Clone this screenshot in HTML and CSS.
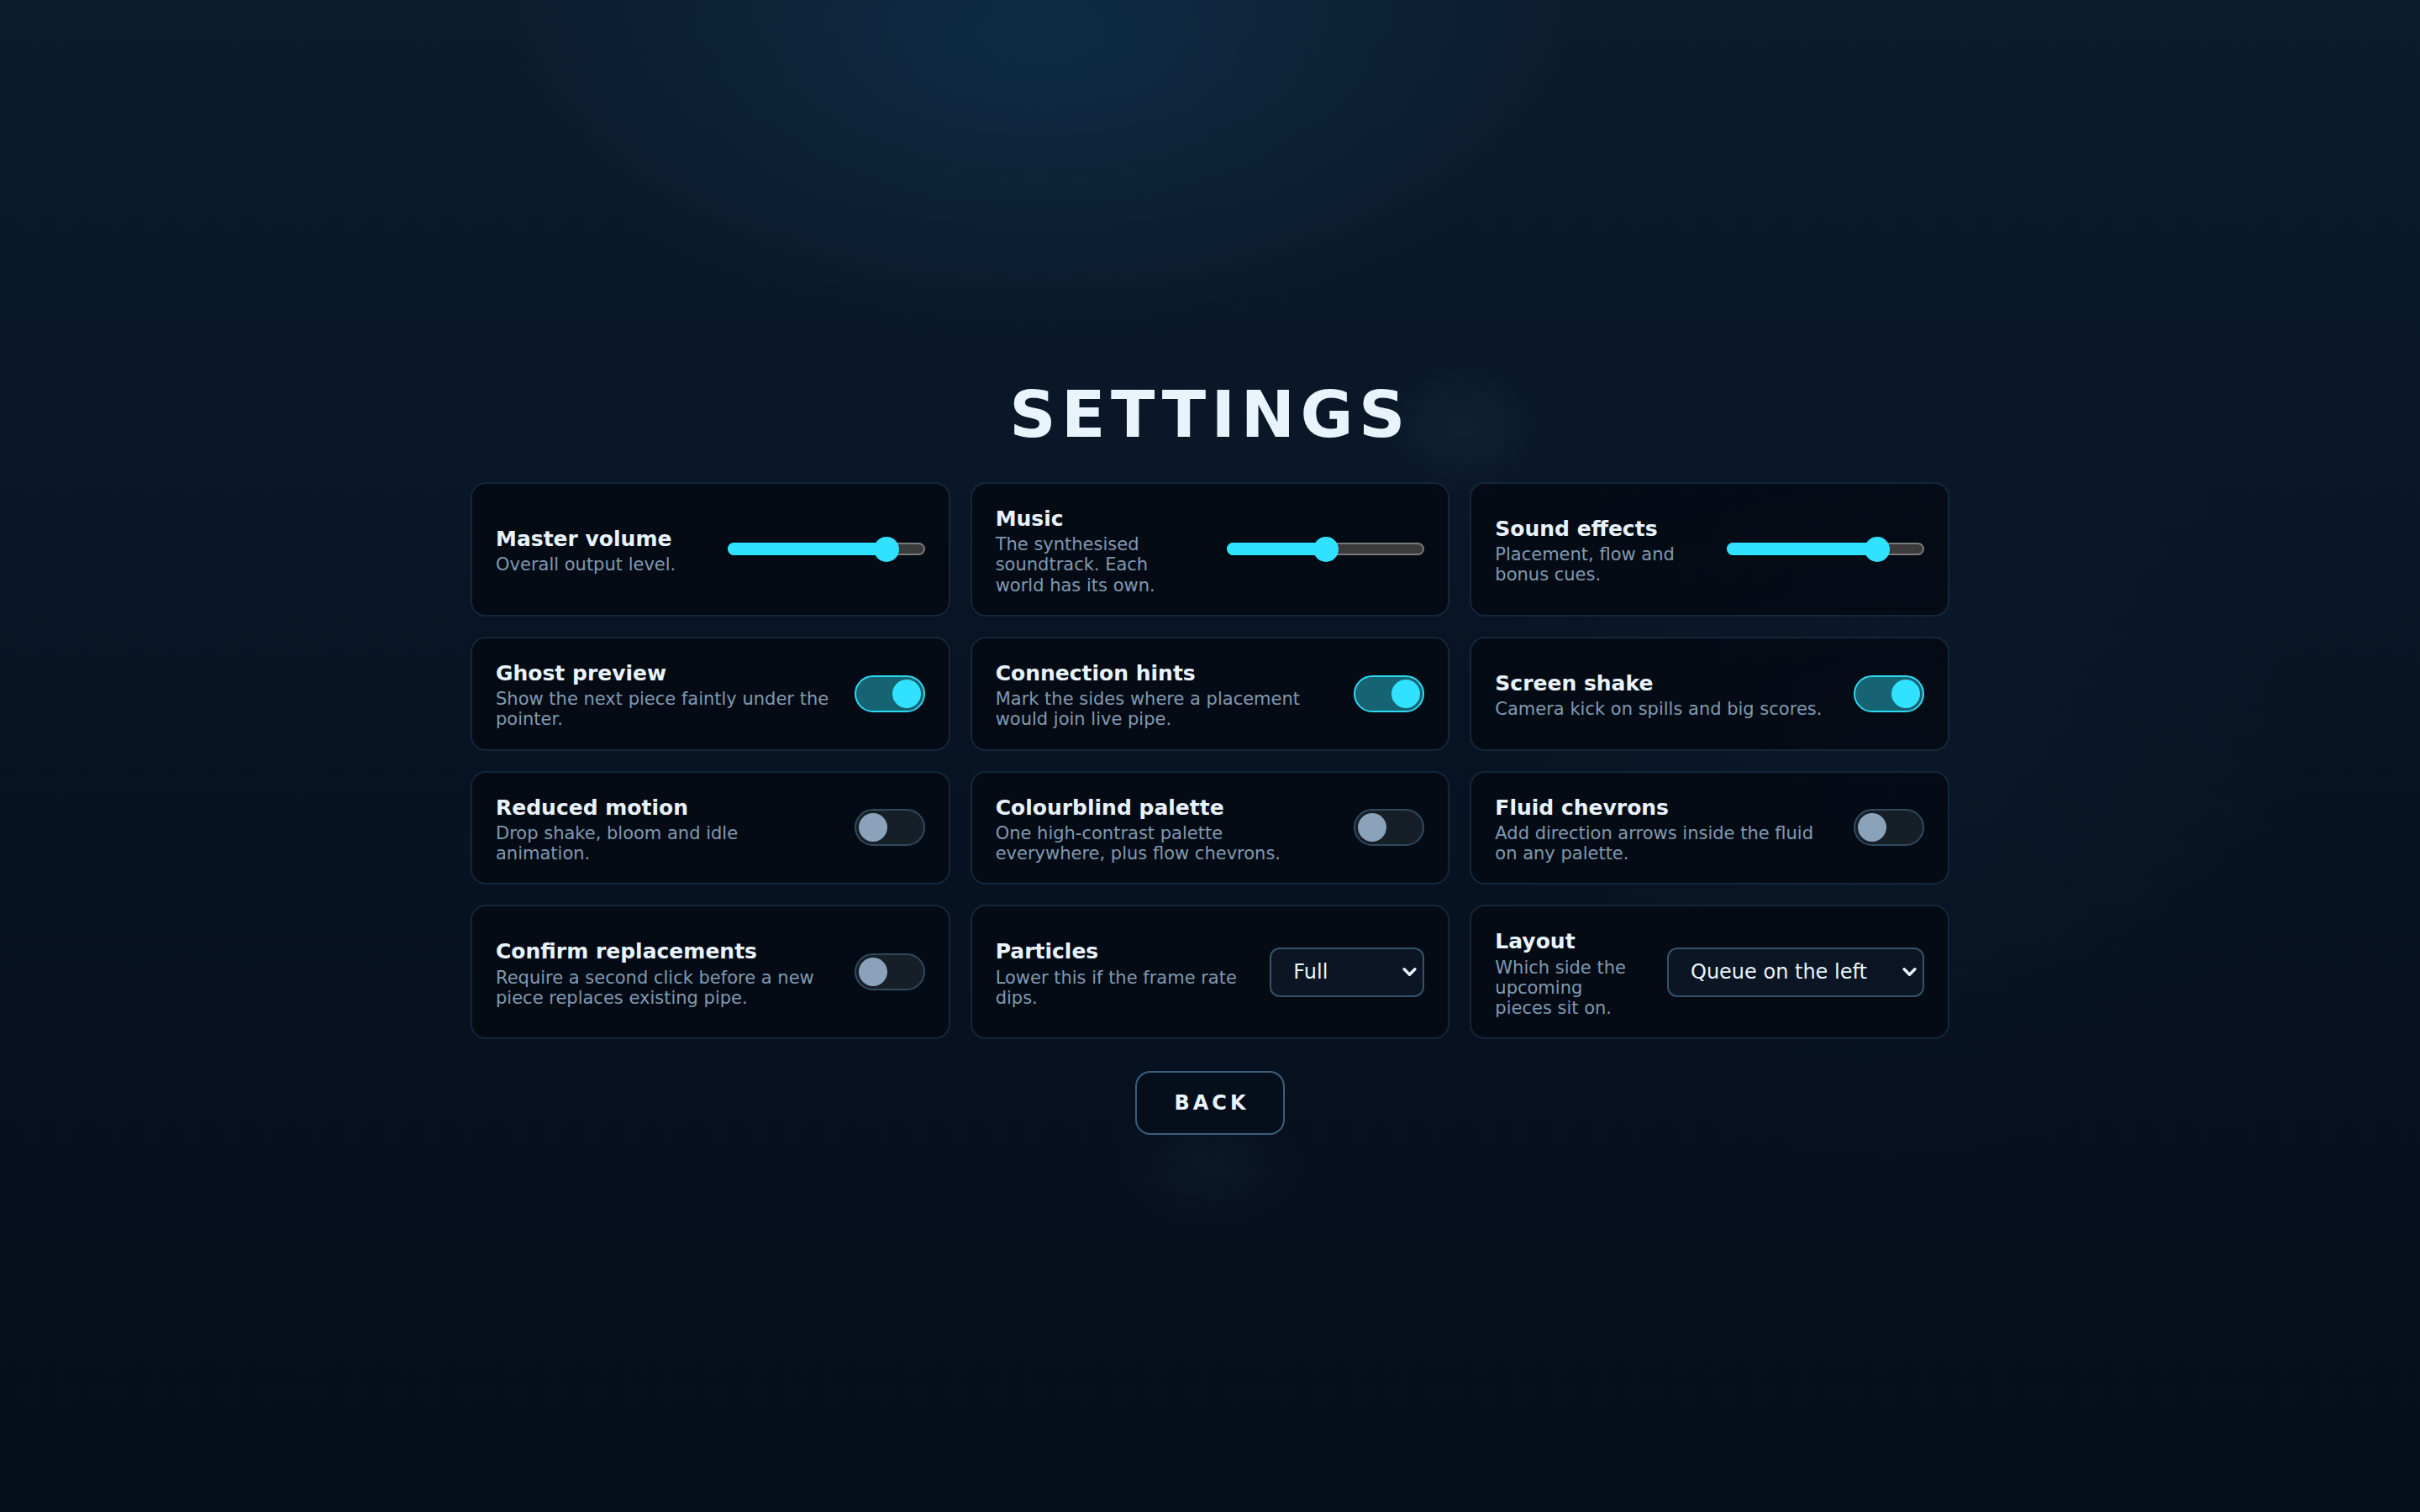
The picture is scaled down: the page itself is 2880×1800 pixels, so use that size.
FILE: index.html
```html
<!DOCTYPE html>
<html lang="en">
<head>
    <meta charset="UTF-8">
    <meta name="viewport" content="width=device-width, initial-scale=1.0">
    <title>Settings</title>
    <link rel="stylesheet" href="styles.css">
</head>
<body>
    <main class="settings">
        <h1 class="settings-title">SETTINGS</h1>

        <div class="settings-grid">
            <div class="setting">
                <div class="setting-text">
                    <div class="setting-name">Master volume</div>
                    <div class="setting-desc">Overall output level.</div>
                </div>
                <div class="slider" style="--v: 0.85">
                    <div class="slider-fill"></div>
                    <div class="slider-thumb"></div>
                </div>
            </div>

            <div class="setting">
                <div class="setting-text">
                    <div class="setting-name">Music</div>
                    <div class="setting-desc">The synthesised soundtrack. Each world has its own.</div>
                </div>
                <div class="slider" style="--v: 0.5">
                    <div class="slider-fill"></div>
                    <div class="slider-thumb"></div>
                </div>
            </div>

            <div class="setting">
                <div class="setting-text">
                    <div class="setting-name">Sound effects</div>
                    <div class="setting-desc">Placement, flow and bonus cues.</div>
                </div>
                <div class="slider" style="--v: 0.8">
                    <div class="slider-fill"></div>
                    <div class="slider-thumb"></div>
                </div>
            </div>

            <div class="setting">
                <div class="setting-text">
                    <div class="setting-name">Ghost preview</div>
                    <div class="setting-desc">Show the next piece faintly under the pointer.</div>
                </div>
                <div class="toggle on"><span class="knob"></span></div>
            </div>

            <div class="setting">
                <div class="setting-text">
                    <div class="setting-name">Connection hints</div>
                    <div class="setting-desc">Mark the sides where a placement would join live pipe.</div>
                </div>
                <div class="toggle on"><span class="knob"></span></div>
            </div>

            <div class="setting">
                <div class="setting-text">
                    <div class="setting-name">Screen shake</div>
                    <div class="setting-desc">Camera kick on spills and big scores.</div>
                </div>
                <div class="toggle on"><span class="knob"></span></div>
            </div>

            <div class="setting">
                <div class="setting-text">
                    <div class="setting-name">Reduced motion</div>
                    <div class="setting-desc">Drop shake, bloom and idle animation.</div>
                </div>
                <div class="toggle"><span class="knob"></span></div>
            </div>

            <div class="setting">
                <div class="setting-text">
                    <div class="setting-name">Colourblind palette</div>
                    <div class="setting-desc">One high-contrast palette everywhere, plus flow chevrons.</div>
                </div>
                <div class="toggle"><span class="knob"></span></div>
            </div>

            <div class="setting">
                <div class="setting-text">
                    <div class="setting-name">Fluid chevrons</div>
                    <div class="setting-desc">Add direction arrows inside the fluid on any palette.</div>
                </div>
                <div class="toggle"><span class="knob"></span></div>
            </div>

            <div class="setting">
                <div class="setting-text">
                    <div class="setting-name">Confirm replacements</div>
                    <div class="setting-desc">Require a second click before a new piece replaces existing pipe.</div>
                </div>
                <div class="toggle"><span class="knob"></span></div>
            </div>

            <div class="setting">
                <div class="setting-text">
                    <div class="setting-name">Particles</div>
                    <div class="setting-desc">Lower this if the frame rate dips.</div>
                </div>
                <div class="select select-short">
                    <select>
                        <option>Full</option>
                        <option>Reduced</option>
                        <option>Off</option>
                    </select>
                    <svg class="chevron" viewBox="0 0 16 10"><polyline points="2,2 8,8 14,2"/></svg>
                </div>
            </div>

            <div class="setting">
                <div class="setting-text">
                    <div class="setting-name">Layout</div>
                    <div class="setting-desc">Which side the upcoming pieces sit on.</div>
                </div>
                <div class="select select-long">
                    <select>
                        <option>Queue on the left</option>
                        <option>Queue on the right</option>
                    </select>
                    <svg class="chevron" viewBox="0 0 16 10"><polyline points="2,2 8,8 14,2"/></svg>
                </div>
            </div>
        </div>

        <button class="back">BACK</button>
    </main>
</body>
</html>
```

FILE: styles.css
```css
* {
    margin: 0;
    padding: 0;
    box-sizing: border-box;
}

body {
    min-height: 100vh;
    display: flex;
    justify-content: center;
    align-items: center;
    font-family: "DejaVu Sans", "Noto Sans", sans-serif;
    color: #e6f1fa;
    background:
        radial-gradient(ellipse 900px 520px at 1240px 40px, rgba(18, 58, 88, 0.55), transparent 70%),
        radial-gradient(ellipse 160px 120px at 1740px 510px, rgba(40, 70, 95, 0.2), transparent 70%),
        radial-gradient(ellipse 700px 700px at 2250px 900px, rgba(20, 40, 60, 0.22), transparent 70%),
        radial-gradient(ellipse 160px 110px at 1440px 1390px, rgba(40, 70, 95, 0.14), transparent 70%),
        linear-gradient(180deg, #0b1c2e 0%, #081424 45%, #060d1a 100%);
}

.settings {
    display: flex;
    flex-direction: column;
    align-items: center;
}

.settings-title {
    font-size: 76.8px;
    font-weight: bold;
    letter-spacing: 6.5px;
    color: #e8f3fc;
    line-height: normal;
    margin-bottom: 36px;
}

.settings-grid {
    width: 1760px;
    display: grid;
    grid-template-columns: repeat(3, 1fr);
    gap: 24px;
}

.setting {
    display: flex;
    align-items: center;
    gap: 28px;
    padding: 23px 28px;
    border: 2px solid #14263a;
    border-radius: 18px;
    background: rgba(4, 10, 19, 0.88);
}

.setting-text {
    flex: 1;
    min-width: 0;
}

.setting-name {
    font-size: 25px;
    line-height: 37.5px;
    font-weight: bold;
    color: #e8f3fc;
}

.setting-desc {
    font-size: 21px;
    line-height: 24.15px;
    color: #8099b0;
}

/* volume sliders */
.slider {
    position: relative;
    flex: none;
    width: 235px;
    height: 15px;
    margin-left: 6px;
    border: 2px solid #7a7a7a;
    border-radius: 8px;
    background: #3b3b3b;
}

.slider-fill {
    position: absolute;
    left: -2px;
    top: -2px;
    bottom: -2px;
    width: calc(15px + var(--v) * 205px);
    border-radius: 8px;
    background: #30e2ff;
}

.slider-thumb {
    position: absolute;
    top: 50%;
    left: calc(13px + var(--v) * 205px);
    width: 30px;
    height: 30px;
    border-radius: 50%;
    background: #30e2ff;
    transform: translate(-50%, -50%);
}

/* toggles */
.toggle {
    flex: none;
    display: flex;
    align-items: center;
    width: 84px;
    height: 44px;
    padding: 3px;
    border: 2px solid #30495e;
    border-radius: 22px;
    background: #161e28;
}

.knob {
    width: 34px;
    height: 34px;
    border-radius: 50%;
    background: #8aa3ba;
}

.toggle.on {
    border-color: #2fdaf3;
    background: #166373;
}

.toggle.on .knob {
    margin-left: auto;
    background: #30e2ff;
}

/* dropdowns */
.select {
    position: relative;
    flex: none;
}

.select select {
    appearance: none;
    -webkit-appearance: none;
    display: block;
    width: 100%;
    height: 59px;
    padding: 0 40px 0 26px;
    font-family: inherit;
    font-size: 24px;
    color: #e8f3fc;
    background: #0b1523;
    border: 2px solid #36526b;
    border-radius: 12px;
    outline: none;
}

.select-short {
    width: 184px;
}

.select-long {
    width: 306px;
}

.chevron {
    position: absolute;
    right: 9px;
    top: 50%;
    width: 17px;
    height: 11px;
    transform: translateY(-50%);
    pointer-events: none;
    fill: none;
    stroke: #e8f3fc;
    stroke-width: 3.2;
    stroke-linecap: round;
    stroke-linejoin: round;
}

.back {
    margin-top: 38px;
    padding: 22px 40px 22px 44px;
    font-family: inherit;
    font-size: 24px;
    font-weight: bold;
    letter-spacing: 4px;
    color: #e8f3fc;
    background: rgba(6, 14, 26, 0.9);
    border: 2px solid #3a5f7c;
    border-radius: 18px;
    cursor: pointer;
}
```
